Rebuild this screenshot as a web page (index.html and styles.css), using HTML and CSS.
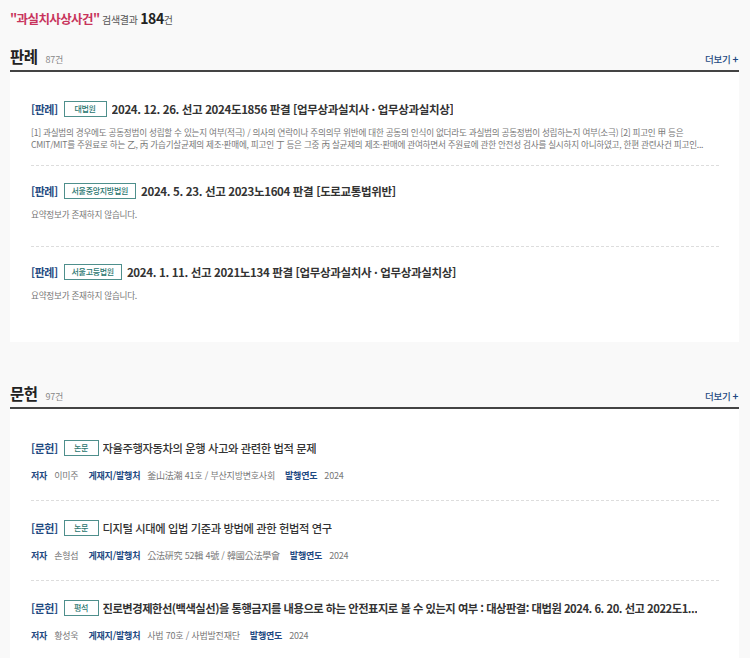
FILE: index.html
```html
<!DOCTYPE html>
<html lang="ko">
<head>
<meta charset="utf-8">
<link rel="stylesheet" href="styles.css">
</head>
<body>
<div class="page">
  <div class="summary-top">
    <span class="kw">"과실치사상사건"</span> <span class="lbl">검색결과</span> <b class="cnt">184</b><span class="lbl">건</span>
  </div>

  <section class="sec">
    <div class="sec-head">
      <h2>판례</h2><span class="sec-cnt">87건</span>
      <a class="more">더보기<span class="plus">+</span></a>
    </div>
    <div class="card">
      <div class="item">
        <div class="title"><span class="kind">[판례]</span><span class="badge">대법원</span><span class="ttl">2024. 12. 26. 선고 2024도1856 판결 [업무상과실치사 · 업무상과실치상]</span></div>
        <p class="desc">[1] 과실범의 경우에도 공동정범이 성립할 수 있는지 여부(적극) / 의사의 연락이나 주의의무 위반에 대한 공동의 인식이 없더라도 과실범의 공동정범이 성립하는지 여부(소극) [2] 피고인 甲 등은 CMIT/MIT를 주원료로 하는 乙, 丙 가습기살균제의 제조·판매에, 피고인 丁 등은 그중 丙 살균제의 제조·판매에 관여하면서 주원료에 관한 안전성 검사를 실시하지 아니하였고, 한편 관련사건 피고인...</p>
      </div>
      <div class="item">
        <div class="title"><span class="kind">[판례]</span><span class="badge">서울중앙지방법원</span><span class="ttl">2024. 5. 23. 선고 2023노1604 판결 [도로교통법위반]</span></div>
        <p class="desc">요약정보가 존재하지 않습니다.</p>
      </div>
      <div class="item">
        <div class="title"><span class="kind">[판례]</span><span class="badge">서울고등법원</span><span class="ttl">2024. 1. 11. 선고 2021노134 판결 [업무상과실치사 · 업무상과실치상]</span></div>
        <p class="desc">요약정보가 존재하지 않습니다.</p>
      </div>
    </div>
  </section>

  <section class="sec sec2">
    <div class="sec-head">
      <h2>문헌</h2><span class="sec-cnt">97건</span>
      <a class="more">더보기<span class="plus">+</span></a>
    </div>
    <div class="card">
      <div class="item lit">
        <div class="title"><span class="kind">[문헌]</span><span class="badge sm">논문</span><span class="ttl normal">자율주행자동차의 운행 사고와 관련한 법적 문제</span></div>
        <div class="meta"><b>저자</b><span>이미주</span><b>게재지/발행처</b><span>釜山法潮 41호 / 부산지방변호사회</span><b>발행연도</b><span>2024</span></div>
      </div>
      <div class="item lit">
        <div class="title"><span class="kind">[문헌]</span><span class="badge sm">논문</span><span class="ttl normal">디지털 시대에 입법 기준과 방법에 관한 헌법적 연구</span></div>
        <div class="meta"><b>저자</b><span>손형섭</span><b>게재지/발행처</b><span>公法硏究 52輯 4號 / 韓國公法學會</span><b>발행연도</b><span>2024</span></div>
      </div>
      <div class="item lit">
        <div class="title"><span class="kind">[문헌]</span><span class="badge sm">평석</span><span class="ttl">진로변경제한선(백색실선)을 통행금지를 내용으로 하는 안전표지로 볼 수 있는지 여부 : 대상판결: 대법원 2024. 6. 20. 선고 2022도1...</span></div>
        <div class="meta"><b>저자</b><span>황성욱</span><b>게재지/발행처</b><span>사법 70호 / 사법발전재단</span><b>발행연도</b><span>2024</span></div>
      </div>
    </div>
  </section>
</div>
</body>
</html>
```

FILE: styles.css
```css
* { box-sizing: border-box; }
html, body { margin: 0; padding: 0; }
body {
  background: #f9f9f9;
  font-family: "Noto Sans CJK KR", "Noto Sans", sans-serif;
  color: #333;
  width: 750px;
  height: 658px;
  overflow: hidden;
}
.page { padding: 0 11px 0 10px; }
.summary-top {
  padding-top: 9px;
  height: 42px;
  font-size: 10px;
  color: #555;
  line-height: 18px;
  letter-spacing: -0.3px;
}
.summary-top .kw { color: #c8345c; font-weight: 700; font-size: 12.5px; letter-spacing: -0.6px; }
.summary-top .cnt { color: #222; font-weight: 700; font-size: 14px; letter-spacing: -0.4px; }
.sec-head {
  display: flex;
  align-items: baseline;
  height: 30px;
  border-bottom: 2px solid #444;
  padding-top: 4px;
}
.sec-head h2 {
  margin: 0;
  font-size: 15.5px;
  font-weight: 700;
  color: #222;
  line-height: 20px;
  letter-spacing: -0.5px;
}
.sec-cnt { font-size: 9px; color: #888; margin-left: 8px; letter-spacing: -0.3px; }
.more {
  margin-left: auto;
  font-size: 9.5px;
  color: #1f4a82;
  font-weight: 500;
  margin-right: 1px;
  letter-spacing: -0.3px;
}
.plus { font-weight: 700; margin-left: 2px; font-size: 10px; }
.card {
  background: #fff;
  padding: 12px 20px 0 21px;
}
.sec:first-of-type .card { height: 270px; }
.sec2 { margin-top: 37px; }
.item {
  padding: 16px 0 0;
  border-bottom: 1px dashed #ddd;
  height: 81px;
}
.item:first-child { height: 82px; }
.item:last-child { border-bottom: none; }
.title {
  display: flex;
  align-items: center;
  white-space: nowrap;
  overflow: hidden;
  line-height: 18px;
}
.kind { color: #1f4a82; font-weight: 700; font-size: 11px; letter-spacing: -0.5px; }
.badge {
  display: inline-block;
  border: 1px solid #4e8f8c;
  color: #2a766f;
  font-size: 8px;
  font-weight: 500;
  padding: 0 7px;
  height: 16px;
  line-height: 14px;
  margin: 0 5px 0 6px;
  min-width: 43px;
  text-align: center;
  letter-spacing: -0.3px;
}
.badge.sm { min-width: 35px; margin-right: 4px; }
.ttl { font-size: 11.5px; font-weight: 700; color: #333; overflow: hidden; text-overflow: ellipsis; letter-spacing: -0.35px; }
.lit .ttl { font-size: 11.3px; letter-spacing: -0.5px; }
.lit .ttl.normal { font-weight: 500; letter-spacing: -0.4px; }
.desc {
  margin: 8px 0 0;
  font-size: 8.6px;
  line-height: 12px;
  color: #777;
  letter-spacing: -0.25px;
  display: -webkit-box;
  -webkit-line-clamp: 2;
  -webkit-box-orient: vertical;
  overflow: hidden;
}
.item.lit { height: 80px; padding-top: 18px; }
.lit .meta {
  margin-top: 13px;
  font-size: 9px;
  color: #777;
  display: flex;
  line-height: 12px;
  letter-spacing: -0.2px;
}
.meta b { color: #1f4a82; font-weight: 700; margin-right: 7px; }
.meta span { margin-right: 10px; }
```
